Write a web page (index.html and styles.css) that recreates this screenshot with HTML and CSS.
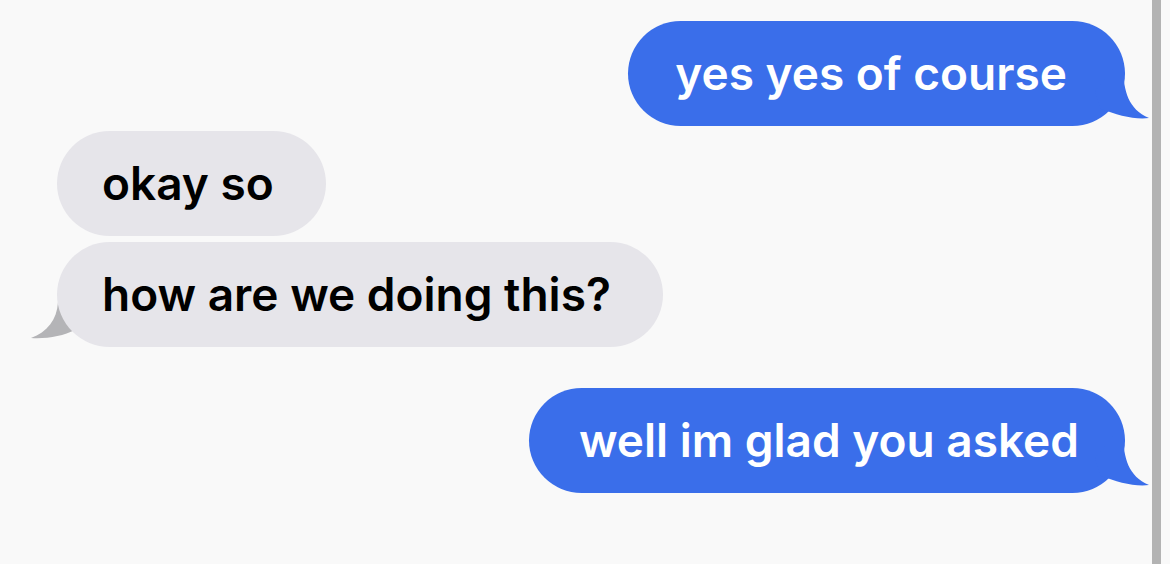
FILE: index.html
```html
<!DOCTYPE html>
<html>
<head>
<meta charset="utf-8">
<link rel="stylesheet" href="styles.css">
</head>
<body>
<div class="screen">
  <div class="chat">
    <div class="row row-out">
      <div class="bubble out wide-end">yes yes of course
        <svg class="tail tail-out" width="60" height="60" viewBox="-30 -55 60 60"><path d="M -12 -52 L -2 -52 C -1 -30, 3 -12, 24 -3 C 10 -1, -8 -6, -24 -12 L -30 -30 Z"/></svg>
      </div>
    </div>
    <div class="row row-in first">
      <div class="bubble in">okay so</div>
    </div>
    <div class="row row-in second">
      <div class="bubble in">how are we doing this?
        <svg class="tail tail-in" width="55" height="60" viewBox="-30 -55 55 60"><path d="M 12 -52 L 1 -40 C 0 -22, -10 -10, -26 -4 C -10 -3, 6 -6, 18 -12 L 24 -30 Z"/></svg>
      </div>
    </div>
    <div class="row row-out last">
      <div class="bubble out">well im glad you asked
        <svg class="tail tail-out" width="60" height="60" viewBox="-30 -55 60 60"><path d="M -12 -52 L -2 -52 C -1 -30, 3 -12, 24 -3 C 10 -1, -8 -6, -24 -12 L -30 -30 Z"/></svg>
      </div>
    </div>
  </div>
  <div class="bar"></div>
  <div class="edge"></div>
</div>
</body>
</html>
```
FILE: styles.css
```css
html, body {
  margin: 0;
  padding: 0;
  background: #f9f9f9;
}
.screen {
  display: flex;
  width: 1170px;
  height: 564px;
  overflow: hidden;
}
.chat {
  flex: 1;
  display: flex;
  flex-direction: column;
  padding-top: 21px;
  font-family: Inter, "Noto Sans", sans-serif;
}
.bar {
  width: 9px;
  background: #b3b3b3;
}
.edge {
  width: 9px;
  background: #f9f9f9;
}
.row {
  display: flex;
}
.row-out {
  justify-content: flex-end;
  padding-right: 27px;
}
.row-in {
  justify-content: flex-start;
  padding-left: 57px;
}
.first {
  margin-top: 5px;
}
.second {
  margin-top: 6px;
  position: relative;
  z-index: 0;
}
.last {
  margin-top: 41px;
}
.bubble {
  position: relative;
  font-size: 46px;
  font-weight: 600;
  line-height: 55px;
  border-radius: 53px;
  white-space: nowrap;
}
.in {
  background: #e6e5ea;
  color: #000000;
  padding: 25px 52px 25px 45px;
}
.out {
  background: #3a6eea;
  color: #ffffff;
  padding: 25px 46px 25px 50px;
}
.out.wide-end {
  padding-left: 47px;
  padding-right: 58px;
}
.tail {
  position: absolute;
  bottom: 0;
  display: block;
}
.tail-out {
  right: -30px;
  fill: #3a6eea;
}
.tail-in {
  left: -30px;
  fill: #b4b4b7;
  z-index: -1;
}
```
